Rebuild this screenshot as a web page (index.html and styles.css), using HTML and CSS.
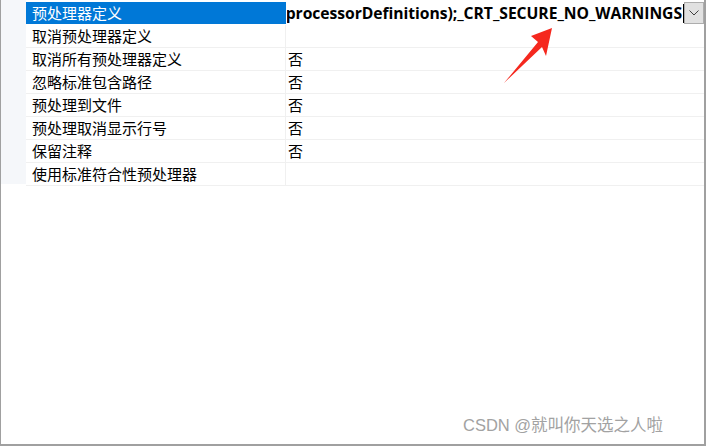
FILE: index.html
```html
<!DOCTYPE html>
<html lang="zh-CN">
<head>
<meta charset="utf-8">
<title>预处理器</title>
<link rel="stylesheet" href="styles.css">
</head>
<body>
<div class="frame">
  <div class="grid">
    <div class="gutter"></div>
    <div class="table">
      <div class="row selected">
        <div class="name">预处理器定义</div>
        <div class="value edit">
          <div class="edit-text"><span>%(PreprocessorDefinitions);_CRT_SECURE_NO_WARNINGS</span><i class="caret"></i></div>
          <div class="drop"><svg width="10" height="6" viewBox="0 0 10 6"><path d="M0.5 0.5 L5 5 L9.5 0.5" fill="none" stroke="#404040" stroke-width="1"/></svg></div>
        </div>
      </div>
      <div class="row"><div class="name">取消预处理器定义</div><div class="value"></div></div>
      <div class="row"><div class="name">取消所有预处理器定义</div><div class="value">否</div></div>
      <div class="row"><div class="name">忽略标准包含路径</div><div class="value">否</div></div>
      <div class="row"><div class="name">预处理到文件</div><div class="value">否</div></div>
      <div class="row"><div class="name">预处理取消显示行号</div><div class="value">否</div></div>
      <div class="row"><div class="name">保留注释</div><div class="value">否</div></div>
      <div class="row"><div class="name">使用标准符合性预处理器</div><div class="value"></div></div>
    </div>
  </div>
  <svg class="arrow" width="60" height="70" viewBox="0 0 60 70">
    <polygon points="50,2 44,30 40,21 2,57 36,16 29,10" fill="#f5281e"/>
  </svg>
  <div class="watermark">CSDN @就叫你天选之人啦</div>
</div>
</body>
</html>
```

FILE: styles.css
```css
html, body {
  margin: 0;
  padding: 0;
  background: #ffffff;
}

body {
  width: 708px;
  height: 447px;
  overflow: hidden;
  font-family: "Noto Sans CJK SC", "Noto Sans", sans-serif;
}

.frame {
  position: relative;
  width: 703px;
  height: 444px;
  border-left: 1px solid #a0a0a0;
  border-right: 2px solid #a0a0a0;
  border-bottom: 2px solid #a0a0a0;
  box-sizing: content-box;
}

.grid {
  display: flex;
  padding-top: 2px;
}

.gutter {
  width: 25px;
  height: 184px;
  margin-top: -2px;
  background: #f5f7fa;
  flex: none;
}

.table {
  flex: 1;
  min-width: 0;
  display: flex;
  flex-direction: column;
}

.row {
  display: flex;
  height: 22px;
  border-bottom: 1px solid #f0f0f0;
  font-size: 15px;
  line-height: 22px;
  color: #000;
}

.name {
  width: 253px;
  padding-left: 6px;
  border-right: 1px solid #f0f0f0;
  white-space: nowrap;
  flex: none;
}

.value {
  flex: 1;
  min-width: 0;
  padding-left: 2px;
  white-space: nowrap;
}

.selected .name {
  background: #0078d7;
  color: #ffffff;
  border-right: 1px solid #0078d7;
}

.selected {
  border-bottom-color: #ffffff;
}

.edit {
  display: flex;
  padding-left: 1px;
}

.edit-text {
  flex: 1 1 0;
  width: 0;
  min-width: 0;
  overflow: hidden;
  display: flex;
  justify-content: flex-end;
  align-items: center;
  font-family: "Open Sans", "Noto Sans", sans-serif;
  font-weight: 700;
  font-size: 15.7px;
  letter-spacing: -0.05px;
}

.edit-text span {
  flex: none;
}

.caret {
  flex: none;
  width: 1px;
  height: 19px;
  background: #000;
  margin-left: 1px;
}

.drop {
  width: 18px;
  height: 20px;
  background: #e1e1e1;
  border: 1px solid #adadad;
  display: flex;
  align-items: center;
  justify-content: center;
  flex: none;
}

.arrow {
  position: absolute;
  left: 501px;
  top: 26px;
}

.watermark {
  position: absolute;
  left: 462px;
  top: 414px;
  font-family: "Liberation Sans", "Noto Sans CJK SC", sans-serif;
  font-size: 16.5px;
  line-height: 22px;
  color: #a2a2a2;
  white-space: nowrap;
}
```
